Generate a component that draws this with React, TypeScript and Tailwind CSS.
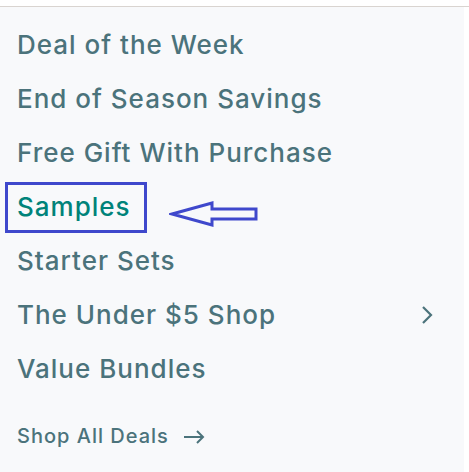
import React from 'react'

const links = [
    'Deal of the Week',
    'End of Season Savings',
    'Free Gift With Purchase',
    'Samples',
    'Starter Sets',
    'The Under $5 Shop',
    'Value Bundles',
]

const App = () => {
    return (
        <div className="h-[472px] w-[469px] bg-white font-['Inter',sans-serif]">
            <div className="h-[6px]" />
            <div className="h-px w-full bg-[#d9d4d0]" />
            <div className="flex h-[465px] w-[464px] flex-col bg-[#f8f9fb] pl-[17px] pr-[30px] pt-[19px]">
                {links.map((name) => {
                    const selected = name === 'Samples'
                    return (
                        <div key={name} className="relative flex h-[54px] items-start justify-between">
                            <span className={`text-[26px] font-medium leading-[38px] tracking-[1px] ${selected ? 'text-[#00837a]' : 'text-[#4b737b]'}`}>
                                {name}
                            </span>
                            {name === 'The Under $5 Shop' && (
                                <svg width="14" height="20" viewBox="0 0 14 20" className="mt-[9px]" fill="none">
                                    <path d="M3 2 L11 10 L3 18" stroke="#4b737b" strokeWidth="2.2" />
                                </svg>
                            )}
                            {selected && (
                                <>
                                    {/* annotation box + arrow */}
                                    <div className="absolute left-[-12px] top-[-6px] h-[51px] w-[142px] border-[3px] border-[#3f48cc]" />
                                    <svg width="92" height="28" viewBox="0 0 92 28" className="absolute left-[152px] top-[12px]" fill="none">
                                        <path d="M3 14 L43 3 L43 9 L87 9 L87 19 L43 19 L43 25 Z" stroke="#3f48cc" strokeWidth="3" strokeLinejoin="miter" />
                                    </svg>
                                </>
                            )}
                        </div>
                    )
                })}
                <div className="mt-[17px] flex items-center gap-[14px] text-[20px] font-medium tracking-[1px] text-[#4b737b]">
                    <span>Shop All Deals</span>
                    <svg width="22" height="14" viewBox="0 0 22 14" fill="none" className="mt-[1px]">
                        <path d="M1 7 H20 M14 1 L20 7 L14 13" stroke="#4b737b" strokeWidth="2" />
                    </svg>
                </div>
            </div>
        </div>
    )
}

export default App
